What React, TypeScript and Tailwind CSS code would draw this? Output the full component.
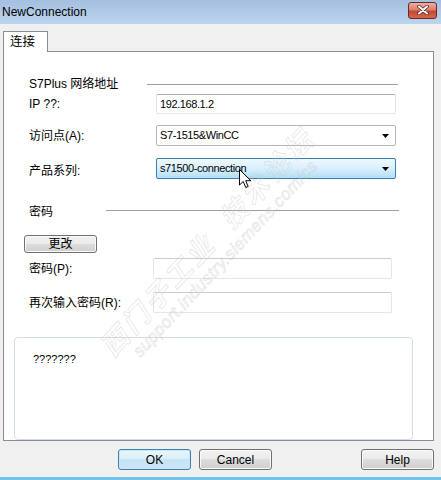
import React from "react";

const FONT = { fontFamily: '"Liberation Sans", "Noto Sans CJK SC", sans-serif' };

function Arrow() {
  return (
    <svg width="7" height="4" viewBox="0 0 7 4" className="absolute right-[6px] top-1/2 -translate-y-1/2">
      <path d="M0 0 H7 L3.5 4 Z" fill="#000" />
    </svg>
  );
}

function TextBox({ value, width, disabled }: { value?: string; width: number; disabled?: boolean }) {
  return (
    <div
      className={
        "h-[21px] flex items-center pl-[3px] bg-white rounded-[2px] border text-[11px] tracking-[-0.4px] text-black " +
        (disabled
          ? "border-[#e2e7ec] border-t-[#c9ccd1]"
          : "border-[#dfe3e8] border-t-[#abadb3] border-b-[#e3e9ef]")
      }
      style={{ width }}
    >
      {value}
    </div>
  );
}

function Combo({ value, focused }: { value: string; focused?: boolean }) {
  return (
    <div
      className={
        "relative h-[21px] w-[240px] flex items-center pl-[3px] rounded-[2px] border text-[11px] tracking-[-0.4px] text-black " +
        (focused
          ? "border-[#3c7fb1] bg-gradient-to-b from-[#eef8fd] via-[#d9f0fc] to-[#b2def6]"
          : "border-[#b5b5b5] bg-white")
      }
    >
      {value}
      <Arrow />
    </div>
  );
}

function Btn({ label, def, h = 21 }: { label: string; def?: boolean; h?: number }) {
  return (
    <div
      className={
        "w-[73px] flex items-center justify-center rounded-[3px] border text-[12px] text-black " +
        (def
          ? "border-[#3c7fb1] bg-[linear-gradient(#eaf6fd_0%,#dbeef9_50%,#c6e4f6_50%,#cde4f1_100%)] shadow-[inset_0_0_0_1px_#c8e8fa]"
          : "border-[#707070] bg-[linear-gradient(#f2f2f2_0%,#ebebeb_50%,#dddddd_50%,#cfcfcf_100%)] shadow-[inset_0_0_0_1px_#fafafa]")
      }
      style={{ height: h }}
    >
      {label}
    </div>
  );
}

export default function App() {
  return (
    <div className="relative w-[441px] h-[480px] flex flex-col bg-[#f0f0f0] overflow-hidden" style={FONT}>
      {/* title bar */}
      <div className="h-[24px] flex items-center justify-between bg-gradient-to-b from-[#a4bfdf] to-[#bdd4ee] pl-[2px] pr-[4px]">
        <span className="text-[12px] text-black">NewConnection</span>
        <div className="w-[29px] h-[17px] rounded-[3px] border border-[#6a2a22] bg-[linear-gradient(#eab0a3_0%,#dc7f6a_45%,#c5472f_55%,#d2694f_100%)] flex items-center justify-center mb-[4px]">
          <svg width="12" height="10" viewBox="0 0 12 10">
            <path d="M2 1.5 L10 8.5 M10 1.5 L2 8.5" stroke="#5a2a24" strokeWidth="3.6" strokeLinecap="round" />
            <path d="M2 1.5 L10 8.5 M10 1.5 L2 8.5" stroke="#ffffff" strokeWidth="2" strokeLinecap="round" />
          </svg>
        </div>
      </div>

      {/* tab header */}
      <div className="pt-[7px] pl-[3px] flex">
        <div className="relative z-10 -mb-px h-[21px] w-[45px] bg-white border border-b-0 border-[#898c95] flex items-center pl-[6px] text-[12.5px] text-black">
          连接
        </div>
      </div>

      {/* tab panel */}
      <div className="relative ml-[3px] w-[431px] h-[390px] bg-white border border-[#898c95] flex flex-col text-[12px] text-black">
        {/* section 1 */}
        <div className="mt-[24px] h-[16px] flex items-center pl-[25px]">
          <div className="w-[118px]">S7Plus 网络地址</div>
          <div className="w-[251px] h-px bg-[#a0a0a0]" />
        </div>
        <div className="mt-[2px] flex items-center pl-[25px]">
          <div className="w-[127px]">IP ??:</div>
          <div className="h-[20px] w-[240px] flex items-center pl-[3px] bg-white rounded-[2px] border border-[#dfe3e8] border-t-[#abadb3] border-b-[#e3e9ef] text-[11px] tracking-[-0.4px]">
            192.168.1.2
          </div>
        </div>
        <div className="mt-[11px] flex items-center pl-[25px]">
          <div className="w-[127px] pt-[1px]">访问点(A):</div>
          <Combo value="S7-1515&WinCC" />
        </div>
        <div className="mt-[11px] flex items-center pl-[25px]">
          <div className="w-[127px] pt-[5px]">产品系列:</div>
          <Combo value="s71500-connection" focused />
        </div>

        {/* section 2 */}
        <div className="mt-[22px] h-[16px] flex items-center pl-[25px]">
          <div className="w-[77px] pt-[3px]">密码</div>
          <div className="w-[293px] h-px bg-[#a0a0a0]" />
        </div>
        <div className="mt-[17px] pl-[20px] flex">
          <Btn label="更改" h={18} />
        </div>
        <div className="mt-[5px] flex items-center pl-[25px]">
          <div className="w-[124px]">密码(P):</div>
          <TextBox width={239} disabled />
        </div>
        <div className="mt-[13px] flex items-center pl-[25px]">
          <div className="w-[124px]">再次输入密码(R):</div>
          <TextBox width={239} disabled />
        </div>

        {/* info box */}
        <div className="mt-[24px] ml-[10px] w-[399px] h-[103px] rounded-[4px] border border-[#d5dde4] pl-[18px] pt-[14px]">
          <div className="text-[11px] leading-[14px]">???????</div>
        </div>

        {/* watermark (overlay) */}
        <div className="pointer-events-none absolute left-[20px] top-[170px] w-[380px] -rotate-[47deg] flex flex-col items-center italic text-transparent [-webkit-text-stroke:0.8px_rgba(200,200,200,0.45)]">
          <div className="text-[27px] font-bold tracking-[4px] leading-[32px]" style={{ fontFamily: '"Noto Sans CJK SC", sans-serif' }}>
            西门子工业&nbsp;&nbsp;技术论坛
          </div>
          <div className="text-[17px] leading-[20px] tracking-[0.5px]">support.industry.siemens.com/cs</div>
        </div>
      </div>

      {/* buttons */}
      <div className="mt-[8px] h-[21px] flex pl-[118px] pr-[7px]">
        <Btn label="OK" def />
        <div className="ml-[8px]">
          <Btn label="Cancel" />
        </div>
        <div className="ml-auto">
          <Btn label="Help" />
        </div>
      </div>
      <div className="flex-1" />
      <div className="h-[3px] bg-[#72c3e8]" />

      {/* mouse cursor */}
      <svg className="absolute left-[239px] top-[169px]" width="13" height="20" viewBox="0 0 13 20">
        <path d="M0.5 0.5 L0.5 16 L4.2 12.5 L6.8 18.5 L9.2 17.5 L6.7 11.7 L11.8 11.7 Z" fill="#fff" stroke="#000" strokeWidth="1" strokeLinejoin="round" />
      </svg>
    </div>
  );
}
